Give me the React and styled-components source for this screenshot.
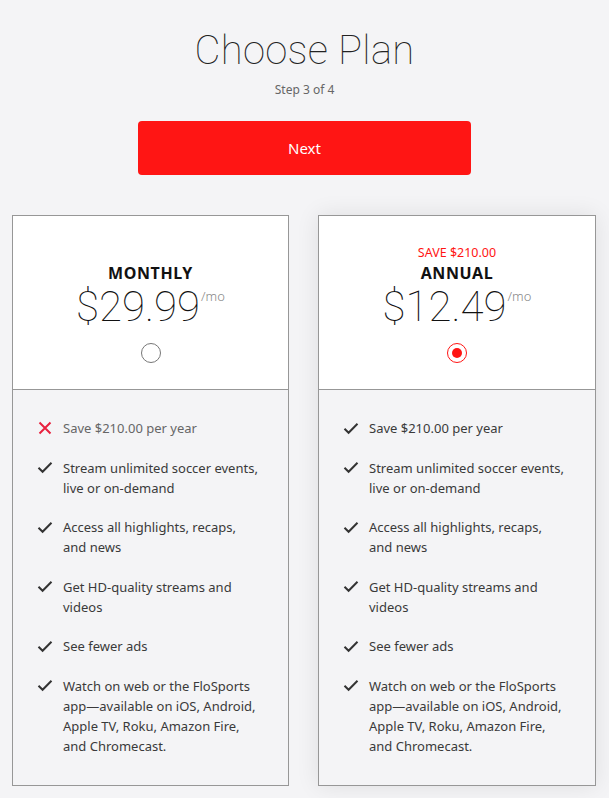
import styled, { createGlobalStyle } from 'styled-components'

const GlobalStyle = createGlobalStyle`
  body {
    margin: 0;
    background: #f4f4f6;
    font-family: "Noto Sans", "Liberation Sans", sans-serif;
    color: #3a3a3a;
  }
`

const Page = styled.div`
  width: 609px;
  padding: 28px 12px 13px;
  box-sizing: border-box;
  display: flex;
  flex-direction: column;
  align-items: center;
`

const Title = styled.h1`
  margin: 0;
  font-family: Roboto, "Noto Sans", sans-serif;
  font-weight: 100;
  font-size: 40px;
  line-height: 46px;
  color: #222;
  letter-spacing: 0.3px;
`

const Step = styled.div`
  margin-top: 8px;
  font-size: 12px;
  line-height: 16px;
  color: #666;
`

const NextButton = styled.button`
  margin-top: 23px;
  width: 333px;
  height: 54px;
  border: none;
  border-radius: 4px;
  background: #ff1514;
  color: #fff;
  font-family: "Noto Sans", sans-serif;
  font-size: 15px;
  font-weight: 400;
  cursor: pointer;
`

const Plans = styled.div`
  margin-top: 40px;
  width: 100%;
  display: grid;
  grid-template-columns: 277px 278px;
  justify-content: space-between;
  padding-right: 1px;
  box-sizing: border-box;
`

const Card = styled.div`
  border: 1px solid #979797;
  height: 571px;
  box-sizing: border-box;
  display: flex;
  flex-direction: column;
  background: #f4f4f6;
  box-shadow: ${p => (p.$selected ? '0 0 22px rgba(0,0,0,0.09)' : 'none')};
`

const CardHead = styled.div`
  background: #fff;
  height: 174px;
  border-bottom: 1px solid #979797;
  display: flex;
  flex-direction: column;
  align-items: center;
  justify-content: flex-end;
  padding-bottom: 26px;
  box-sizing: border-box;
`

const Save = styled.div`
  font-size: 12.5px;
  line-height: 16px;
  color: #ff1514;
  margin-bottom: 2px;
`

const PlanName = styled.div`
  font-size: 16px;
  font-weight: 700;
  line-height: 20px;
  color: #111;
  letter-spacing: 0.6px;
`

const Price = styled.div`
  display: flex;
  align-items: flex-start;
  font-family: Roboto, "Noto Sans", sans-serif;
  font-weight: 100;
  font-size: 42px;
  line-height: 46px;
  color: #111;
  margin-top: 1px;
`

const Per = styled.span`
  font-size: 13px;
  line-height: 20px;
  color: #888;
  font-family: "Noto Sans", sans-serif;
  font-weight: 300;
  margin-left: 1px;
  margin-top: 2px;
`

const Radio = styled.span`
  margin-top: 13px;
  width: 20px;
  height: 20px;
  border-radius: 50%;
  box-sizing: border-box;
  border: 1.5px solid ${p => (p.$on ? '#ff1514' : '#777')};
  display: flex;
  align-items: center;
  justify-content: center;
  &::after {
    content: '';
    width: 10px;
    height: 10px;
    border-radius: 50%;
    background: ${p => (p.$on ? '#ff1514' : 'transparent')};
  }
`

const Features = styled.ul`
  list-style: none;
  margin: 0;
  padding: 28px 28px 0 24px;
  display: flex;
  flex-direction: column;
  gap: 19.5px;
`

const Feature = styled.li`
  display: flex;
  align-items: flex-start;
  gap: 10px;
  font-size: 13px;
  line-height: 20px;
  color: ${p => (p.$muted ? '#666' : '#3a3a3a')};
`

const IconBox = styled.span`
  width: 16px;
  height: 20px;
  flex: none;
  display: flex;
  align-items: center;
  justify-content: center;
`

const Check = () => (
  <svg width="16" height="13" viewBox="0 0 16 13">
    <path d="M1.5 6.8 L5.6 10.8 L14.5 1.8" fill="none" stroke="#333" strokeWidth="2" />
  </svg>
)

const Cross = () => (
  <svg width="14" height="14" viewBox="0 0 14 14">
    <path d="M1.5 1.5 L12.5 12.5 M12.5 1.5 L1.5 12.5" fill="none" stroke="#e8213f" strokeWidth="2" />
  </svg>
)

const features = [
  'Stream unlimited soccer events, live or on-demand',
  'Access all highlights, recaps, and news',
  'Get HD-quality streams and videos',
  'See fewer ads',
  'Watch on web or the FloSports app\u2014available on iOS, Android, Apple TV, Roku, Amazon Fire, and Chromecast.',
]

const plans = [
  { name: 'MONTHLY', price: '$29.99', selected: false, save: null },
  { name: 'ANNUAL', price: '$12.49', selected: true, save: 'SAVE $210.00' },
]

const App = () => {
  return (
    <>
      <GlobalStyle />
      <Page>
        <Title>Choose Plan</Title>
        <Step>Step 3 of 4</Step>
        <NextButton>Next</NextButton>
        <Plans>
          {plans.map(plan => (
            <Card key={plan.name} $selected={plan.selected}>
              <CardHead>
                {plan.save && <Save>{plan.save}</Save>}
                <PlanName>{plan.name}</PlanName>
                <Price>
                  {plan.price}
                  <Per>/mo</Per>
                </Price>
                <Radio $on={plan.selected} />
              </CardHead>
              <Features>
                <Feature $muted={!plan.selected}>
                  <IconBox>{plan.selected ? <Check /> : <Cross />}</IconBox>
                  Save $210.00 per year
                </Feature>
                {features.map(f => (
                  <Feature key={f}>
                    <IconBox><Check /></IconBox>
                    <span>{f}</span>
                  </Feature>
                ))}
              </Features>
            </Card>
          ))}
        </Plans>
      </Page>
    </>
  )
}

export default App
